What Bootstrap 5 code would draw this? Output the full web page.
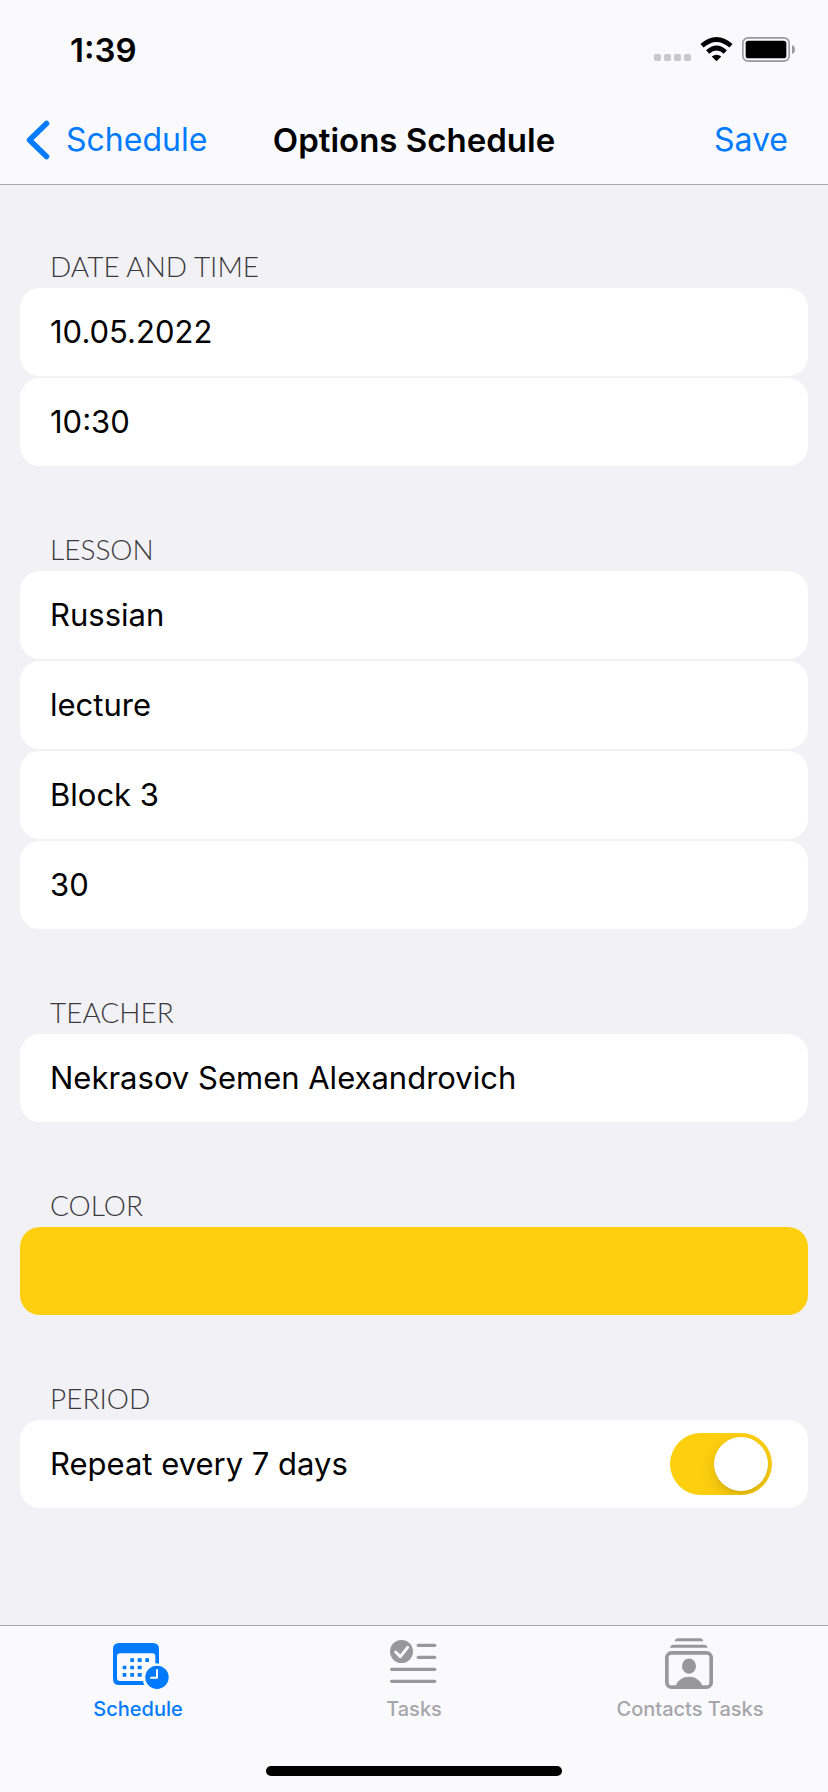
<!DOCTYPE html>
<html lang="en">
<head>
<meta charset="utf-8">
<meta name="viewport" content="width=device-width, initial-scale=1">
<title>Options Schedule</title>
<link href="https://cdn.jsdelivr.net/npm/bootstrap@5.3.0/dist/css/bootstrap.min.css" rel="stylesheet">
<style>
  :root { --ios-blue: #007aff; --ios-yellow: #fecf0f; --ios-bar: #fafafd; --ios-line: #a9a9ae; }
  body { background: #f2f1f6; color: #000; font-family: Inter, "Liberation Sans", sans-serif; font-size: 31px; line-height: 40px; }
  svg { display: block; flex: none; }

  /* Status bar and title bar */
  .top-bar { background: var(--ios-bar); border-bottom: 1px solid var(--ios-line); }
  .status-row { padding: 30px 33px 0 70px; height: 88px; font-size: 33px; font-weight: 600; }
  .status-icons { height: 40px; }
  .title-row { display: grid; grid-template-columns: 1fr auto 1fr; height: 96px; padding: 8px 26px 0; }
  .title-row .btn { --bs-btn-color: var(--ios-blue); --bs-btn-hover-color: var(--ios-blue); --bs-btn-active-color: var(--ios-blue); font-size: 32px; line-height: 40px; }
  .title-row .save-btn { justify-self: end; margin-right: 14px; }
  .title-text { font-size: 33px; line-height: 40px; font-weight: 600; }

  /* Grouped settings */
  .settings { padding: 65px 20px 60px; }
  .group + .group { margin-top: 67px; }
  .group-label { font-family: Lato, "Open Sans", sans-serif; font-weight: 300; font-size: 28px; line-height: 32px; padding: 0 0 6px 30px; color: #3a3a3c; }
  .cells { --bs-list-group-color: #000; --bs-list-group-border-width: 0; gap: 2px; }
  .cells .list-group-item { min-height: 88px; padding: 0 36px 0 30px; border-radius: 20px; background: #fff; }
  .cells .color-cell { background: var(--ios-yellow); }
  .repeat-switch.form-check-input { position: relative; width: 102px; height: 62px; margin: 0; border: 0; border-radius: 31px; background: #e9e9ea; overflow: hidden; flex: none; }
  .repeat-switch.form-check-input:checked { background: var(--ios-yellow); }
  .repeat-switch::before { content: ""; position: absolute; top: 4px; left: 4px; width: 54px; height: 54px; border-radius: 50%; background: #fff; box-shadow: 0 6px 16px rgba(0,0,0,.14), 0 2px 2px rgba(0,0,0,.05); }
  .repeat-switch:checked::before { left: auto; right: 4px; }

  /* Tab bar */
  .tab-bar { background: var(--ios-bar); border-top: 1px solid var(--ios-line); padding-bottom: 16px; }
  .tab-link { gap: 8px; padding-top: 12px; font-size: 20px; line-height: 24px; font-weight: 500; color: #a6a6aa; text-decoration: none; }
  .tab-link svg { color: #98989c; }
  .tab-link.active, .tab-link.active svg { color: var(--ios-blue); }
  .home-bar { width: 296px; height: 10px; border-radius: 5px; background: #000; margin: 45px auto 0; }
</style>
</head>
<body class="d-flex flex-column min-vh-100">

<header class="top-bar">
  <div class="status-row d-flex justify-content-between align-items-start">
    <span>1:39</span>
    <div class="status-icons d-flex align-items-center">
      <svg width="141" height="26" viewBox="717 111 423 78" aria-label="Wi-Fi connected, battery full" role="img">
        <g fill="#c9c9cc">
          <rect x="717" y="162" width="21" height="21" rx="5"/><rect x="747" y="162" width="21" height="21" rx="5"/>
          <rect x="777" y="162" width="21" height="21" rx="5"/><rect x="807" y="162" width="21" height="21" rx="5"/>
        </g>
        <g fill="none" stroke="#000" stroke-width="14">
          <path d="M861 137.500Q904.500 99.500 948 137.500"/><path d="M878 156Q904.500 132 931 156"/>
        </g>
        <path d="M890 169.500Q904.500 158.500 919 169.500L904.500 184Z"/>
        <rect x="983.500" y="113.500" width="139" height="70" rx="16" fill="none" stroke="#9b9b9d" stroke-width="5"/>
        <rect x="992" y="122" width="122" height="53" rx="8"/>
        <path d="M1131 135Q1140 139 1140 148.500T1131 162Z" fill="#9b9b9d"/>
      </svg>
    </div>
  </div>
  <nav class="title-row align-items-center" aria-label="Page">
    <button type="button" class="btn p-0 border-0 d-flex align-items-center">
      <svg class="me-3" width="24" height="40" viewBox="0 0 24 40" fill="none" stroke="currentColor" stroke-width="5.500" stroke-linecap="round" stroke-linejoin="round" aria-hidden="true"><path d="M20.500 3.500 3.500 20 20.500 36.500"/></svg>
      Schedule
    </button>
    <h1 class="title-text m-0">Options Schedule</h1>
    <button type="button" class="btn save-btn p-0 border-0">Save</button>
  </nav>
</header>

<main class="settings flex-grow-1">
  <section class="group">
    <h2 class="group-label m-0">DATE AND TIME</h2>
    <ul class="cells list-group">
      <li class="list-group-item d-flex align-items-center">10.05.2022</li>
      <li class="list-group-item d-flex align-items-center">10:30</li>
    </ul>
  </section>
  <section class="group">
    <h2 class="group-label m-0">LESSON</h2>
    <ul class="cells list-group">
      <li class="list-group-item d-flex align-items-center">Russian</li>
      <li class="list-group-item d-flex align-items-center">lecture</li>
      <li class="list-group-item d-flex align-items-center">Block 3</li>
      <li class="list-group-item d-flex align-items-center">30</li>
    </ul>
  </section>
  <section class="group">
    <h2 class="group-label m-0">TEACHER</h2>
    <ul class="cells list-group">
      <li class="list-group-item d-flex align-items-center">Nekrasov Semen Alexandrovich</li>
    </ul>
  </section>
  <section class="group">
    <h2 class="group-label m-0">COLOR</h2>
    <ul class="cells list-group">
      <li class="list-group-item color-cell"></li>
    </ul>
  </section>
  <section class="group">
    <h2 class="group-label m-0">PERIOD</h2>
    <ul class="cells list-group">
      <li class="list-group-item d-flex align-items-center justify-content-between">
        <label for="repeat">Repeat every 7 days</label>
        <input class="form-check-input repeat-switch" type="checkbox" role="switch" id="repeat" checked>
      </li>
    </ul>
  </section>
</main>

<footer class="tab-bar">
  <nav class="row g-0" aria-label="Tabs">
    <a href="#schedule" class="tab-link active col d-flex flex-column align-items-center" aria-current="page">
      <svg width="62" height="51" viewBox="81 84 186 153" fill="currentColor" aria-hidden="true">
        <path fill-rule="evenodd" d="M117 99H219Q237 99 237 117V161A41 41 0 0 0 226 160V139Q226 130 217 130H120Q111 130 111 139V204Q111 213 120 213H189A42 42 0 0 0 193 225H117Q99 225 99 207V117Q99 99 117 99Z"/>
        <path d="M151 145h11v11h-11zM173 145h12v11h-12zM196 145h11v11h-11zM128 167h11v11h-11zM151 167h11v11h-11zM173 167h12v11h-12zM128 189h11v11h-11zM151 189h11v11h-11zM173 189h12v11h-12z"/>
        <circle cx="231" cy="202" r="35"/>
        <path d="M231 180V203H213" fill="none" stroke="#fafafd" stroke-width="6" stroke-linecap="round" stroke-linejoin="round"/>
      </svg>
      <span>Schedule</span>
    </a>
    <a href="#tasks" class="tab-link col d-flex flex-column align-items-center">
      <svg width="48" height="51" viewBox="90 84 144 153" fill="currentColor" aria-hidden="true">
        <circle cx="124.500" cy="124.500" r="34.500"/>
        <path d="M107 126 121 140 143 112" fill="none" stroke="#fafafd" stroke-width="9" stroke-linecap="round" stroke-linejoin="round"/>
        <rect x="170" y="101" width="59" height="10" rx="5"/><rect x="170" y="137" width="59" height="10" rx="5"/>
        <rect x="90" y="173" width="139" height="10" rx="5"/><rect x="90" y="209" width="139" height="10" rx="5"/>
      </svg>
      <span>Tasks</span>
    </a>
    <a href="#contacts" class="tab-link col d-flex flex-column align-items-center">
      <svg width="50" height="51" viewBox="195 84 150 153" fill="currentColor" aria-hidden="true">
        <path d="M224 94Q226 85 234 85H300Q308 85 310 94ZM210 113Q212 104 220 104H313Q321 104 323 113Z"/>
        <rect x="200.500" y="128.500" width="133" height="103" rx="14" fill="none" stroke="currentColor" stroke-width="11"/>
        <ellipse cx="267" cy="168.500" rx="21" ry="23"/>
        <path d="M227 228C232 210 250 200 267 200S302 210 307 228Z"/>
      </svg>
      <span>Contacts Tasks</span>
    </a>
  </nav>
  <div class="home-bar"></div>
</footer>

<script src="https://cdn.jsdelivr.net/npm/bootstrap@5.3.0/dist/js/bootstrap.bundle.min.js"></script>
</body>
</html>
